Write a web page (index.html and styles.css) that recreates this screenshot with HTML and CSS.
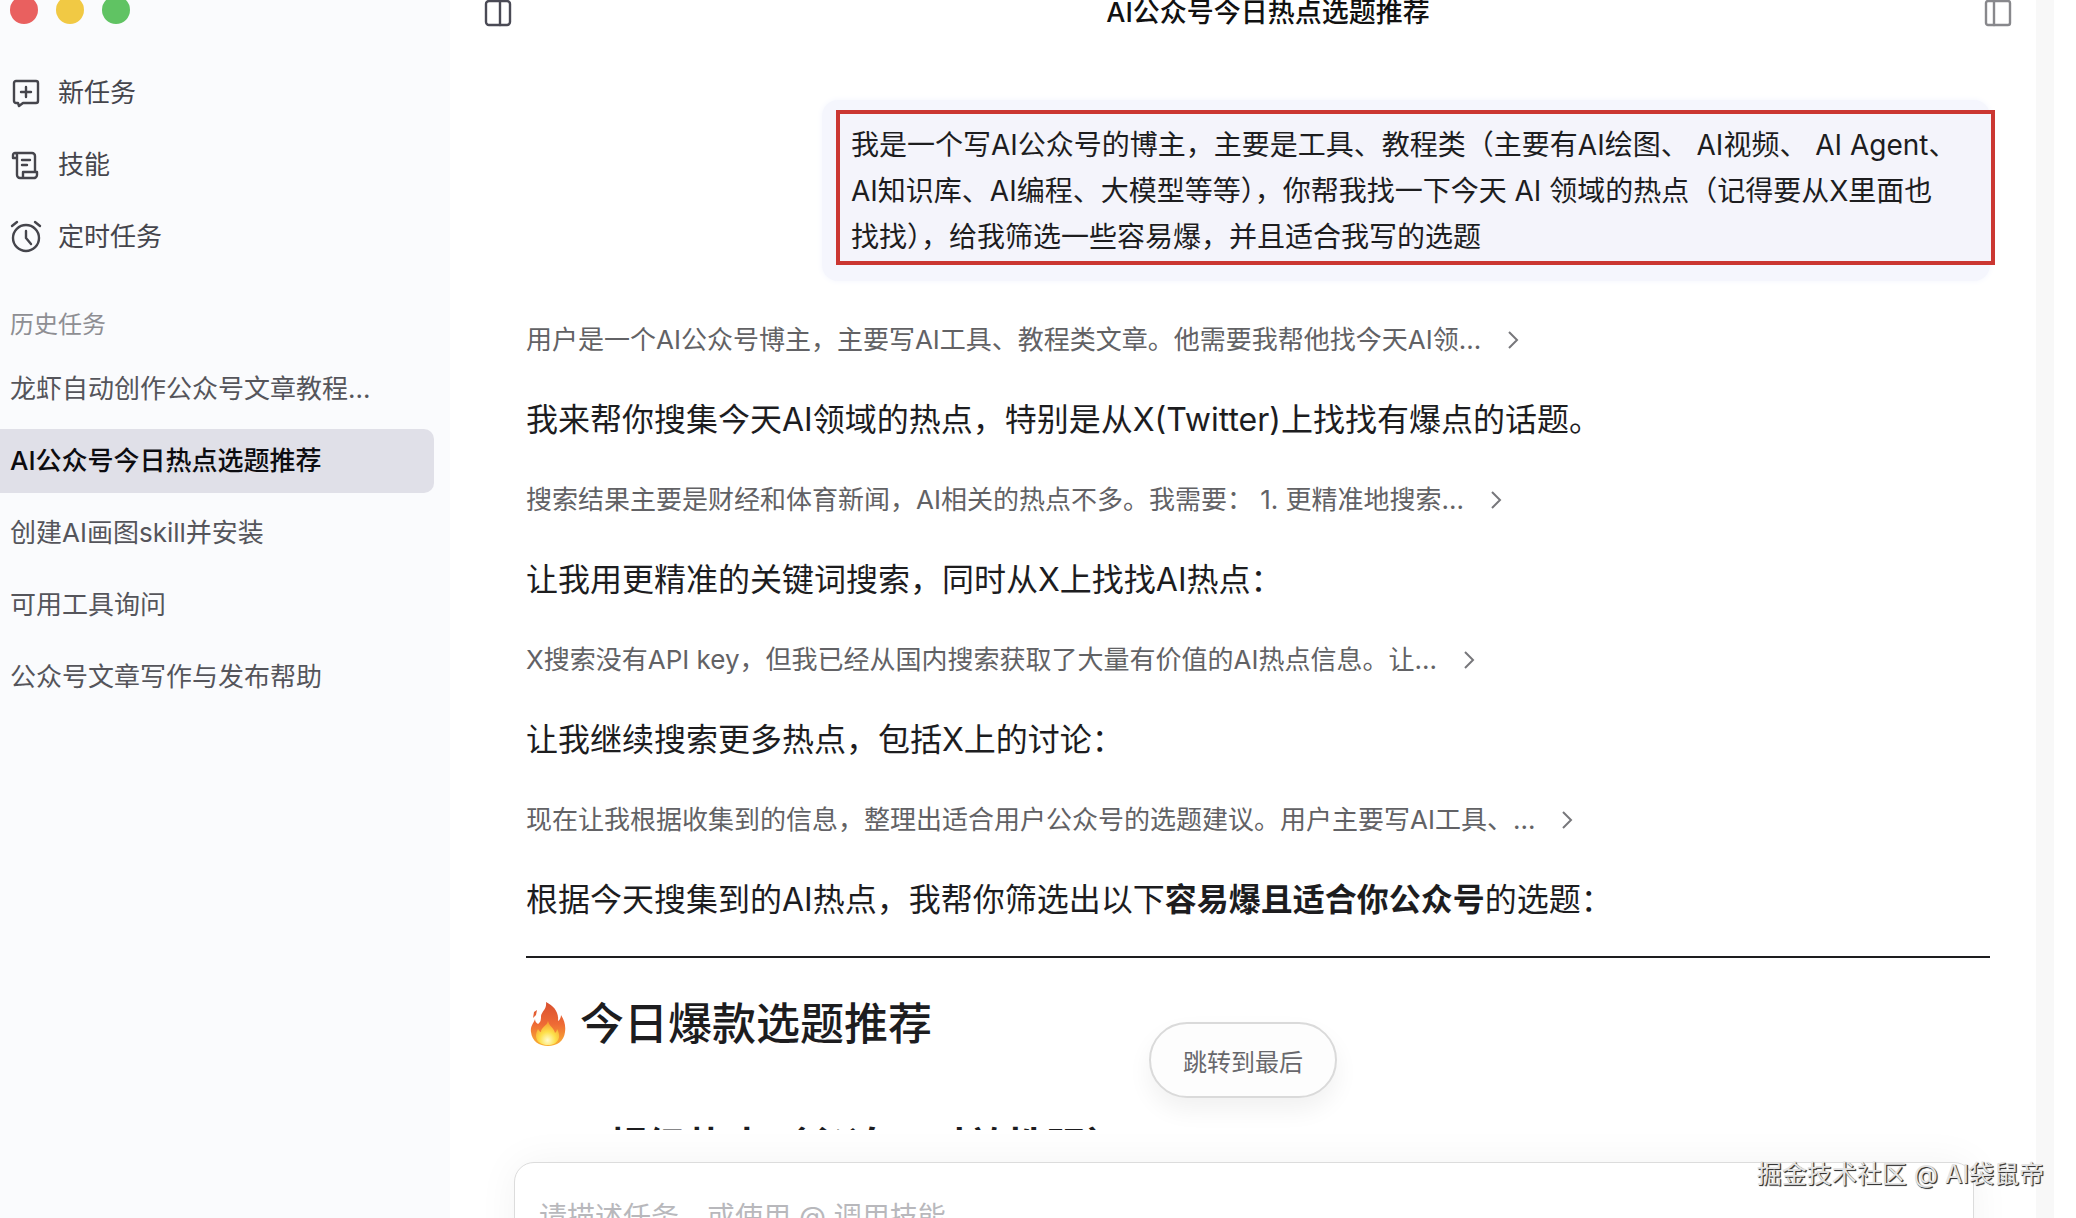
FILE: index.html
```
<!DOCTYPE html>
<html lang="zh-CN">
<head>
<meta charset="UTF-8">
<title>AI公众号今日热点选题推荐</title>
<link rel="stylesheet" href="styles.css">
</head>
<body>
<div class="app">
  <aside class="sidebar">
    <div class="lights"><span class="light red"></span><span class="light yellow"></span><span class="light green"></span></div>
    <nav class="menu">
      <a href="#"><svg class="icon" viewBox="0 0 28 28"><path d="M4 2h20a2 2 0 0 1 2 2v18a2 2 0 0 1-2 2H11l-4 3-1-3H4a2 2 0 0 1-2-2V4a2 2 0 0 1 2-2zM14 8v10M9 13h10"/></svg>新任务</a>
      <a href="#"><svg class="icon" viewBox="0 0 28 28"><path d="M5 7H1V4a2 2 0 0 1 4 0v20a3 3 0 0 0 3 3h15M3 2h17a3 3 0 0 1 3 3v15M10 9h8M10 14h5M11 27v-6h14v3a3 3 0 0 1-3 3"/></svg>技能</a>
      <a href="#"><svg class="icon" viewBox="0 0 28 28"><circle cx="14" cy="15" r="13"/><path d="M14 8v7l5 6M0 3l5-4M28 3l-5-4"/></svg>定时任务</a>
    </nav>
    <h2 class="history-title">历史任务</h2>
    <nav class="history">
      <a href="#">龙虾自动创作公众号文章教程...</a>
      <a href="#" class="active">AI公众号今日热点选题推荐</a>
      <a href="#">创建AI画图skill并安装</a>
      <a href="#">可用工具询问</a>
      <a href="#">公众号文章写作与发布帮助</a>
    </nav>
  </aside>

  <main class="main">
    <header class="topbar">
      <button type="button" class="icon-btn" aria-label="侧边栏"><svg class="icon" viewBox="0 0 28 28"><rect x="2" y="2" width="24" height="24" rx="3"/><path d="M16 2v24"/></svg></button>
      <h1>AI公众号今日热点选题推荐</h1>
      <button type="button" class="icon-btn muted" aria-label="面板"><svg class="icon" viewBox="0 0 28 28"><rect x="2" y="2" width="24" height="24" rx="2"/><path d="M10 2v24"/></svg></button>
    </header>

    <section class="chat">
      <div class="bubble">
        <p class="marked">我是一个写AI公众号的博主，主要是工具、教程类（主要有AI绘图、 AI视频、 AI Agent、<br>AI知识库、AI编程、大模型等等），你帮我找一下今天 AI 领域的热点（记得要从X里面也<br>找找），给我筛选一些容易爆，并且适合我写的选题</p>
      </div>
      <button type="button" class="thought">用户是一个AI公众号博主，主要写AI工具、教程类文章。他需要我帮他找今天AI领...<svg class="chevron" viewBox="0 0 12 20"><path d="M2 2l8 8-8 8"/></svg></button>
      <p>我来帮你搜集今天AI领域的热点，特别是从X(Twitter)上找找有爆点的话题。</p>
      <button type="button" class="thought">搜索结果主要是财经和体育新闻，AI相关的热点不多。我需要： 1. 更精准地搜索...<svg class="chevron" viewBox="0 0 12 20"><path d="M2 2l8 8-8 8"/></svg></button>
      <p>让我用更精准的关键词搜索，同时从X上找找AI热点：</p>
      <button type="button" class="thought">X搜索没有API key，但我已经从国内搜索获取了大量有价值的AI热点信息。让...<svg class="chevron" viewBox="0 0 12 20"><path d="M2 2l8 8-8 8"/></svg></button>
      <p>让我继续搜索更多热点，包括X上的讨论：</p>
      <button type="button" class="thought">现在让我根据收集到的信息，整理出适合用户公众号的选题建议。用户主要写AI工具、...<svg class="chevron" viewBox="0 0 12 20"><path d="M2 2l8 8-8 8"/></svg></button>
      <p>根据今天搜集到的AI热点，我帮你筛选出以下<strong>容易爆且适合你公众号</strong>的选题：</p>
      <hr>
      <h2 class="section-title">
        <svg class="flame" viewBox="0 0 44 48">
          <defs>
            <linearGradient id="outer" x1="0" y1="0" x2="0" y2="1"><stop offset="0" stop-color="#d9502f"/><stop offset="0.5" stop-color="#ee6a35"/><stop offset="1" stop-color="#f9b233"/></linearGradient>
            <radialGradient id="inner" cx="0.5" cy="0.8" r="0.7"><stop offset="0" stop-color="#fffbd0"/><stop offset="0.5" stop-color="#fde04a"/><stop offset="1" stop-color="#f8a332"/></radialGradient>
          </defs>
          <path fill="url(#outer)" d="M20 2c8 4 13 10 12 19 2-1 3-4 3-6 3 5 5 10 4 17-1 9-8 14-17 14S6 41 5 32c-1-6 3-9 4-13 0 2 1 4 3 5 3-2 3-5 3-8 1-5 6-7 5-14zM8 12l3-2-1 5-3 3z"/>
          <path fill="url(#inner)" d="M22 21c1 5 6 7 7 12 1-1 2-2 2-4 5 8 1 16-9 16S7 38 12 29c1 2 2 3 3 3 0-5 6-6 7-11z"/>
        </svg>今日爆款选题推荐</h2>
      <h3 class="sub-title">超级热点（必追，时效性强）</h3>
    </section>

    <footer class="composer">
      <button type="button" class="jump">跳转到最后</button>
      <textarea class="prompt" aria-label="任务描述" placeholder="请描述任务，或使用 @ 调用技能"></textarea>
    </footer>
  </main>
  <div class="gutter"></div>
</div>
<div class="watermark">掘金技术社区 @ AI袋鼠帝</div>
</body>
</html>
```
FILE: styles.css
```
* {
  box-sizing: border-box;
}
body {
  margin: 0;
  height: 100vh;
  overflow: hidden;
  position: relative;
  background: #fff;
  color: #1d1d1f;
  font-family: Inter, "Noto Sans CJK SC", sans-serif;
}
h1, h2, h3, p {
  margin: 0;
}
a {
  color: inherit;
  text-decoration: none;
}
button {
  font-family: inherit;
  cursor: pointer;
}
.app {
  display: flex;
  height: 100%;
}
.icon {
  width: 28px;
  height: 28px;
  flex: none;
  fill: none;
  stroke: currentColor;
  stroke-width: 2.4;
  stroke-linecap: round;
  stroke-linejoin: round;
  overflow: visible;
}

/* sidebar */
.sidebar {
  flex: none;
  width: 450px;
  padding-right: 16px;
  background: #fafbfd;
}
.lights {
  display: flex;
  gap: 18px;
  height: 61px;
  margin-top: -4px;
  padding-left: 10px;
}
.light {
  width: 28px;
  height: 28px;
  border-radius: 50%;
}
.red {
  background: #e9605f;
}
.yellow {
  background: #f1c944;
}
.green {
  background: #60c363;
}
.menu, .history {
  display: flex;
  flex-direction: column;
  gap: 8px;
  font-size: 26px;
  line-height: 64px;
}
.menu {
  padding-top: 4px;
  color: #45454c;
}
.menu a {
  display: flex;
  align-items: center;
  gap: 18px;
  padding-left: 12px;
}
.history-title {
  margin: 32px 0 8px;
  padding-left: 10px;
  font-size: 24px;
  line-height: 48px;
  font-weight: 400;
  color: #8e8e93;
}
.history a {
  height: 64px;
  padding-left: 10px;
  border-radius: 0 10px 10px 0;
  color: #55555b;
}
.history .active {
  background: #e0e0e8;
  color: #0c0c10;
  font-weight: 500;
}

/* conversation */
.main {
  flex: 1;
  min-width: 0;
  display: flex;
  flex-direction: column;
}
.topbar {
  flex: none;
  display: flex;
  align-items: center;
  justify-content: space-between;
  height: 26px;
  padding: 0 24px 0 34px;
}
.topbar h1 {
  padding-left: 40px;
  font-size: 27px;
  line-height: 26px;
  font-weight: 500;
  color: #111;
}
.icon-btn {
  display: flex;
  padding: 0;
  border: 0;
  background: none;
  color: #4a4a55;
}
.muted {
  color: #88888c;
}
.chat {
  flex: 1;
  min-height: 0;
  overflow: hidden;
  display: flex;
  flex-direction: column;
  align-items: flex-start;
  gap: 32px;
  padding: 74px 46px 0 76px;
  font-size: 32px;
  line-height: 48px;
}
.chat > * {
  flex: none;
}
.bubble {
  align-self: flex-end;
  margin-bottom: 3px;
  padding: 10px 0 16px 14px;
  border-radius: 16px;
  background: #f5f6fd;
  box-shadow: 0 0 6px #f3f5fd;
}
.marked {
  width: 1159px;
  margin-right: -5px;
  padding: 8px 11px 1px;
  border: 4px solid #cb3732;
  background: #f4f4fb;
  font-size: 28px;
  line-height: 46px;
  white-space: nowrap;
}
.thought {
  display: flex;
  align-items: center;
  gap: 26px;
  padding: 0;
  border: 0;
  background: none;
  font-size: 26px;
  line-height: 48px;
  color: #626265;
}
.chevron {
  width: 12px;
  height: 20px;
  fill: none;
  stroke: #77777b;
  stroke-width: 2;
}
strong {
  font-weight: 700;
}
hr {
  align-self: stretch;
  height: 2px;
  margin: 0;
  border: 0;
  background: #1d1d1f;
}
.section-title {
  display: flex;
  align-items: center;
  gap: 10px;
  padding-top: 6px;
  font-size: 44px;
  line-height: 56px;
  font-weight: 500;
}
.flame {
  width: 44px;
  height: 48px;
}
.sub-title {
  padding: 39px 0 0 81px;
  font-size: 40px;
  font-weight: 700;
}

/* composer */
.composer {
  position: relative;
  flex: none;
  height: 88px;
  padding: 32px 62px 0 64px;
}
.prompt {
  display: block;
  width: 100%;
  height: 160px;
  padding: 32px 24px;
  border: 1px solid #dcdcdc;
  border-radius: 20px;
  background: #fff;
  box-shadow: 0 0 40px rgba(0, 0, 0, 0.05);
  font-family: inherit;
  font-size: 28px;
  line-height: 44px;
  resize: none;
}
.prompt::placeholder {
  color: #b8b8bc;
}
.jump {
  position: absolute;
  left: 50%;
  bottom: 120px;
  transform: translateX(-50%);
  height: 76px;
  padding: 0 32px;
  border: 2px solid #dadada;
  border-radius: 38px;
  background: #fdfdfd;
  box-shadow: 0 12px 24px rgba(0, 0, 0, 0.06);
  font-size: 24px;
  color: #68686c;
}
.gutter {
  flex: none;
  width: 40px;
  border-right: 22px solid #fff;
  background: #f8f8f8;
}
.watermark {
  position: absolute;
  right: 32px;
  bottom: 26px;
  font-size: 25px;
  line-height: 36px;
  color: #e4e4e4;
  text-shadow: 1px 1px 1px #333, 1px 1px 0 #555;
}
```
